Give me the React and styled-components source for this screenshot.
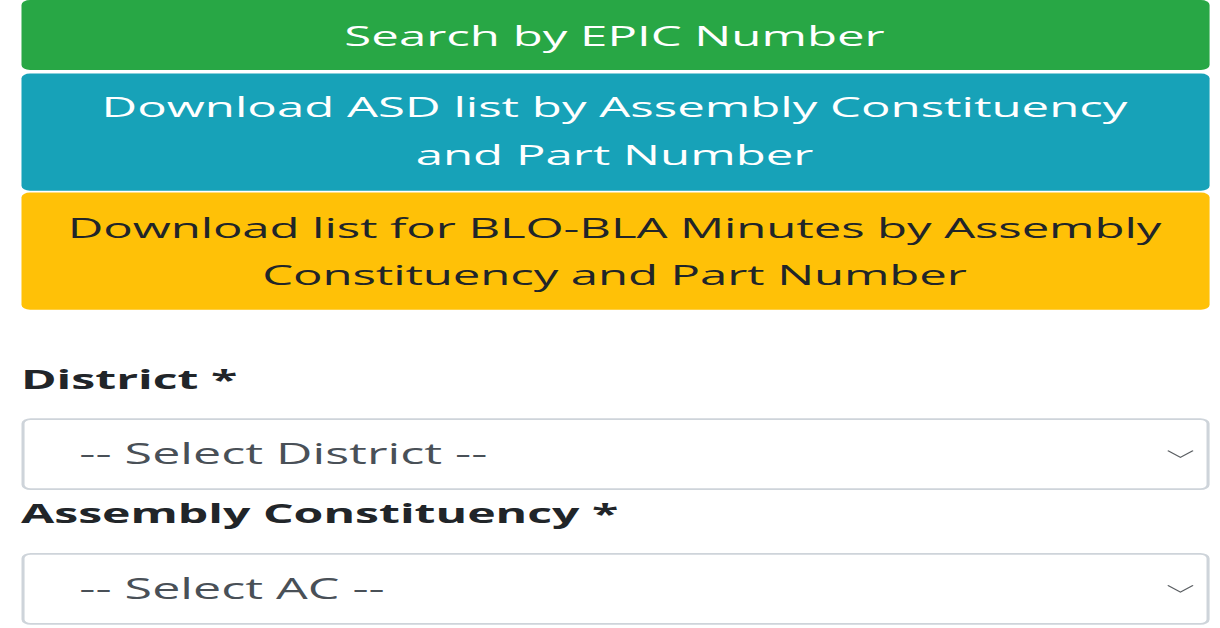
import React from 'react';
import styled, { createGlobalStyle } from 'styled-components';

// the reference is a phone page stretched to 1220x628, so the page is laid out
// at phone size and then stretched the same way
const SCALE_X = 3.07;
const SCALE_Y = 1.75;

const GlobalStyle = createGlobalStyle`
  html, body {
    margin: 0;
    padding: 0;
    background: #fff;
    overflow: hidden;
  }
  * {
    box-sizing: border-box;
  }
`;

const Viewport = styled.div`
  width: 1220px;
  height: 628px;
  overflow: hidden;
`;

const Page = styled.div`
  width: ${1220 / SCALE_X}px;
  padding: 0 3.9px 0 6.84px;
  transform: scale(${SCALE_X}, ${SCALE_Y});
  transform-origin: 0 0;
  font-family: 'Open Sans', 'Noto Sans', sans-serif;
  font-size: 16px;
  line-height: 27px;
  color: #212529;
`;

const ButtonStack = styled.div`
  display: flex;
  flex-direction: column;
  gap: 1.5px;
`;

const ActionButton = styled.button`
  display: block;
  width: 100%;
  margin: 0;
  padding: 6.5px 4px;
  border: 0;
  border-radius: 2.8px;
  background: ${(p) => p.$bg};
  color: ${(p) => p.$fg};
  font: inherit;
  letter-spacing: ${(p) => p.$tight ? '-0.04px' : '0'};
  text-align: center;
  cursor: pointer;
`;

const Form = styled.div`
  display: flex;
  flex-direction: column;
  margin-top: 26.4px;
`;

const Label = styled.label`
  display: block;
  font-size: 15.7px;
  font-weight: 700;
  margin-bottom: 9px;
`;

const SelectBox = styled.div`
  display: flex;
  align-items: center;
  justify-content: space-between;
  height: 41px;
  padding: 6px 4px 6px 18px;
  border: 1px solid #ced4da;
  border-radius: 3px;
  background: #fff;
  color: #495057;
  font-size: 16.35px;
`;

const Chevron = () => (
  <svg width="9" height="5" viewBox="0 0 9 5">
    <path d="M0.4 0.5 L4.5 4.3 L8.6 0.5" fill="none" stroke="#5b5f63" strokeWidth="0.55" />
  </svg>
);

function Select({ placeholder }) {
  return (
    <SelectBox>
      <span>{placeholder}</span>
      <Chevron />
    </SelectBox>
  );
}

export default function App() {
  return (
    <Viewport>
      <GlobalStyle />
      <Page>
        <ButtonStack>
          <ActionButton $bg="#28a745" $fg="#fff">Search by EPIC Number</ActionButton>
          <ActionButton $bg="#17a2b8" $fg="#fff">
            Download ASD list by Assembly Constituency
            <br />
            and Part Number
          </ActionButton>
          <ActionButton $bg="#ffc107" $fg="#212529" $tight>
            Download list for BLO-BLA Minutes by Assembly
            <br />
            Constituency and Part Number
          </ActionButton>
        </ButtonStack>
        <Form>
          <Label>District *</Label>
          <Select placeholder="-- Select District --" />
          <Label>Assembly Constituency *</Label>
          <Select placeholder="-- Select AC --" />
        </Form>
      </Page>
    </Viewport>
  );
}
